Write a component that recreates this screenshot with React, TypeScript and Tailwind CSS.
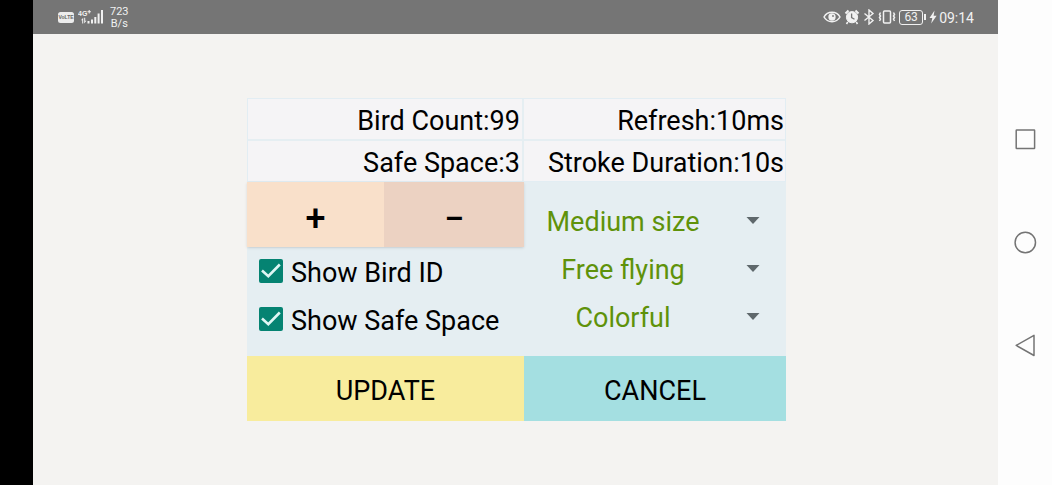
import React, { useState } from 'react';

interface CheckOptionProps {
  id: string;
  label: string;
  checked: boolean;
  onChange: (value: boolean) => void;
}

const CheckOption = ({ id, label, checked, onChange }: CheckOptionProps) => (
  <div className="flex h-12 items-center gap-2">
    <span className="grid size-6 shrink-0">
      <input
        id={id}
        type="checkbox"
        checked={checked}
        onChange={(e) => onChange(e.target.checked)}
        className="peer col-start-1 row-start-1 size-6 appearance-none rounded-xs border-2 border-[#058372] checked:bg-[#058372]"
      />
      <svg
        viewBox="0 0 24 24"
        className="pointer-events-none invisible col-start-1 row-start-1 size-6 peer-checked:visible"
        fill="none"
        stroke="#dff6f4"
        strokeWidth="2.6"
      >
        <path d="M3 11.5 L9.3 17.2 L20.8 5.5" />
      </svg>
    </span>
    <label htmlFor={id} className="pt-1 whitespace-nowrap">{label}</label>
  </div>
);

interface SpinnerProps {
  label: string;
  options: string[];
}

const Spinner = ({ label, options }: SpinnerProps) => (
  <div className="grid h-12 items-center">
    <select
      aria-label={label}
      className="col-start-1 row-start-1 h-12 w-full appearance-none bg-transparent pt-1 pr-16 text-center text-[#5f920a]"
    >
      {options.map((option) => (
        <option key={option}>{option}</option>
      ))}
    </select>
    <svg
      viewBox="0 0 14 7"
      className="pointer-events-none col-start-1 row-start-1 mr-[26px] h-[7px] w-3.5 justify-self-end"
    >
      <path d="M0.5 0 H13.5 L7 7 Z" fill="#5f686c" />
    </svg>
  </div>
);

const StatusBar = () => (
  <header className="flex h-[34px] shrink-0 items-center justify-between bg-[#757575] px-6 text-[#f1f1f1]">
    <div className="flex items-center gap-1">
      <svg viewBox="0 0 16 11" className="ml-px h-[11px] w-4">
        <rect width="16" height="11" rx="2.5" fill="#ececec" />
        <text x="8" y="7.4" textAnchor="middle" fontSize="5" fontWeight="700" fontFamily="Liberation Sans, sans-serif" fill="#666666">VoLTE</text>
      </svg>
      <svg viewBox="0 0 26 16" className="h-4 w-[26px]" fill="currentColor">
        <text x="0" y="6.5" fontSize="7" fontWeight="700" fontFamily="Liberation Sans, sans-serif">4G</text>
        <path d="M10.7 1h1v1.2h1.2v1h-1.2v1.2h-1V3.200H9.500v-1h1.200z" />
        <path d="M3 11.200L5.200 8.800V14.500H4.200V11.200ZM6.200 8.800h1v3h1.200L6.200 14.500Z" />
        <path d="M9.500 12h2v2.500h-2zM13 10.500h2v4h-2zM16.300 8h2v6.500h-2zM19.600 4.500h2v10h-2zM23 1h2v13.500h-2z" />
      </svg>
      <div className="ml-0.5 pt-0.5 text-center text-[11px] leading-3">
        <div>723</div>
        <div>B/s</div>
      </div>
    </div>

    <div className="flex items-center gap-[3px]">
      <svg viewBox="0 0 18 14" className="h-[14px] w-[18px]" fill="none" stroke="currentColor" strokeWidth="1.500">
        <path d="M1 7C4.500 0.800 13.500 0.800 17 7C13.500 13.200 4.500 13.200 1 7Z" />
        <circle cx="9" cy="7" r="2.900" fill="currentColor" />
        <circle cx="10" cy="6" r="0.900" fill="#757575" stroke="none" />
      </svg>
      <svg viewBox="0 0 16 16" className="size-4" fill="none" stroke="currentColor">
        <circle cx="8" cy="8.200" r="5.600" fill="currentColor" />
        <path d="M1.500 4.500L4.500 1.500M14.500 4.500L11.500 1.500" strokeWidth="2" />
        <path d="M3.800 12.800L2.500 15M12.200 12.800L13.500 15" strokeWidth="1.600" />
        <path d="M7.600 4.600V8.600L10.500 10.200" stroke="#757575" strokeWidth="1.300" />
      </svg>
      <svg viewBox="0 0 12 16" className="h-4 w-3" fill="none" stroke="currentColor" strokeWidth="1.400">
        <path d="M1.500 4.500L10 11.500L6 15V1L10 4.500L1.500 11.500" />
      </svg>
      <svg viewBox="0 0 18 14" className="h-[14px] w-[18px]" fill="none" stroke="currentColor" strokeWidth="1.500">
        <rect x="5.500" y="1" width="7" height="12" rx="1" />
        <path d="M2.500 2.500L1.500 4.500L2.500 6L1.500 7.500L2.500 9L1.500 11M15.500 2.500L16.500 4.500L15.500 6L16.500 7.500L15.500 9L16.500 11" />
      </svg>
      <div className="flex items-center gap-px">
        <span className="flex h-[15px] w-6 items-center justify-center rounded-[3px] border border-current text-xs">63</span>
        <span className="h-1.5 w-0.5 bg-current" />
      </div>
      <div className="flex items-center gap-0.5">
        <svg viewBox="0 0 8 14" className="h-[14px] w-2" fill="currentColor">
          <path d="M5.500 0.500L0.500 8H3.300L2.200 13.500L7.600 5.800H4.600Z" />
        </svg>
        <span className="pt-px text-sm">09:14</span>
      </div>
    </div>
  </header>
);

const NavigationBar = () => (
  <nav className="flex w-[54px] shrink-0 flex-col items-center justify-center gap-[79px] bg-[#fdfdfd] text-[#747474]">
    <button aria-label="Recent apps">
      <svg viewBox="0 0 24 24" className="size-6" fill="none" stroke="currentColor" strokeWidth="1.500">
        <rect x="3.200" y="2" width="18.400" height="18.400" rx="0.500" />
      </svg>
    </button>
    <button aria-label="Home">
      <svg viewBox="0 0 24 24" className="size-6" fill="none" stroke="currentColor" strokeWidth="1.500">
        <circle cx="12.300" cy="11.500" r="10.200" />
      </svg>
    </button>
    <button aria-label="Back">
      <svg viewBox="0 0 24 24" className="size-6" fill="none" stroke="currentColor" strokeWidth="1.500" strokeLinejoin="round">
        <path d="M21 1.300V21.500L3.200 11.400Z" />
      </svg>
    </button>
  </nav>
);

export default function App() {
  const [birdCount, setBirdCount] = useState(99);
  const [showId, setShowId] = useState(true);
  const [showSafeSpace, setShowSafeSpace] = useState(true);

  return (
    <div className="flex min-h-screen bg-[#f4f3f1] font-['Roboto',sans-serif]">
      <div className="w-[33px] shrink-0 bg-black" />

      <div className="flex min-w-0 flex-1 flex-col">
        <StatusBar />

        <main className="flex flex-1 items-center justify-center pl-0.5">
          <div className="w-full max-w-[539px] bg-[#e5eef2] text-[27px] leading-9 text-black">
            <div className="grid grid-cols-[277fr_262fr] gap-y-0.5 border border-[#e2edf3] text-right whitespace-nowrap">
              <div className="mr-0.5 bg-[#f5f4f6] pt-1 pr-0.5">Bird Count:{birdCount}</div>
              <div className="bg-[#f5f4f6] pt-1 pr-px">Refresh:10ms</div>
              <div className="mr-0.5 bg-[#f5f4f6] pt-1 pr-0.5">Safe Space:3</div>
              <div className="bg-[#f5f4f6] pt-1 pr-px">Stroke Duration:10s</div>
            </div>

            <div className="grid grid-cols-[277fr_262fr]">
              <div>
                <div className="grid h-[65px] grid-cols-[137fr_140fr] text-4xl font-medium shadow-sm">
                  <button onClick={() => setBirdCount(birdCount + 1)} className="bg-[#f9e0ca] pt-2">+</button>
                  <button onClick={() => setBirdCount(birdCount - 1)} className="bg-[#ecd2c2] pt-2">−</button>
                </div>
                <div className="pl-3">
                  <CheckOption id="show-id" label="Show Bird ID" checked={showId} onChange={setShowId} />
                  <CheckOption id="show-space" label="Show Safe Space" checked={showSafeSpace} onChange={setShowSafeSpace} />
                </div>
              </div>

              <div className="pt-3.5 pb-4">
                <Spinner label="Bird size" options={['Medium size', 'Small size', 'Large size']} />
                <Spinner label="Flying mode" options={['Free flying', 'Follow']} />
                <Spinner label="Colour mode" options={['Colorful', 'Single color']} />
              </div>
            </div>

            <div className="grid h-[65px] grid-cols-[277fr_262fr]">
              <button className="bg-[#f8ec9d] pt-1">UPDATE</button>
              <button className="bg-[#a4dfe1] pt-1">CANCEL</button>
            </div>
          </div>
        </main>
      </div>

      <NavigationBar />
    </div>
  );
}
